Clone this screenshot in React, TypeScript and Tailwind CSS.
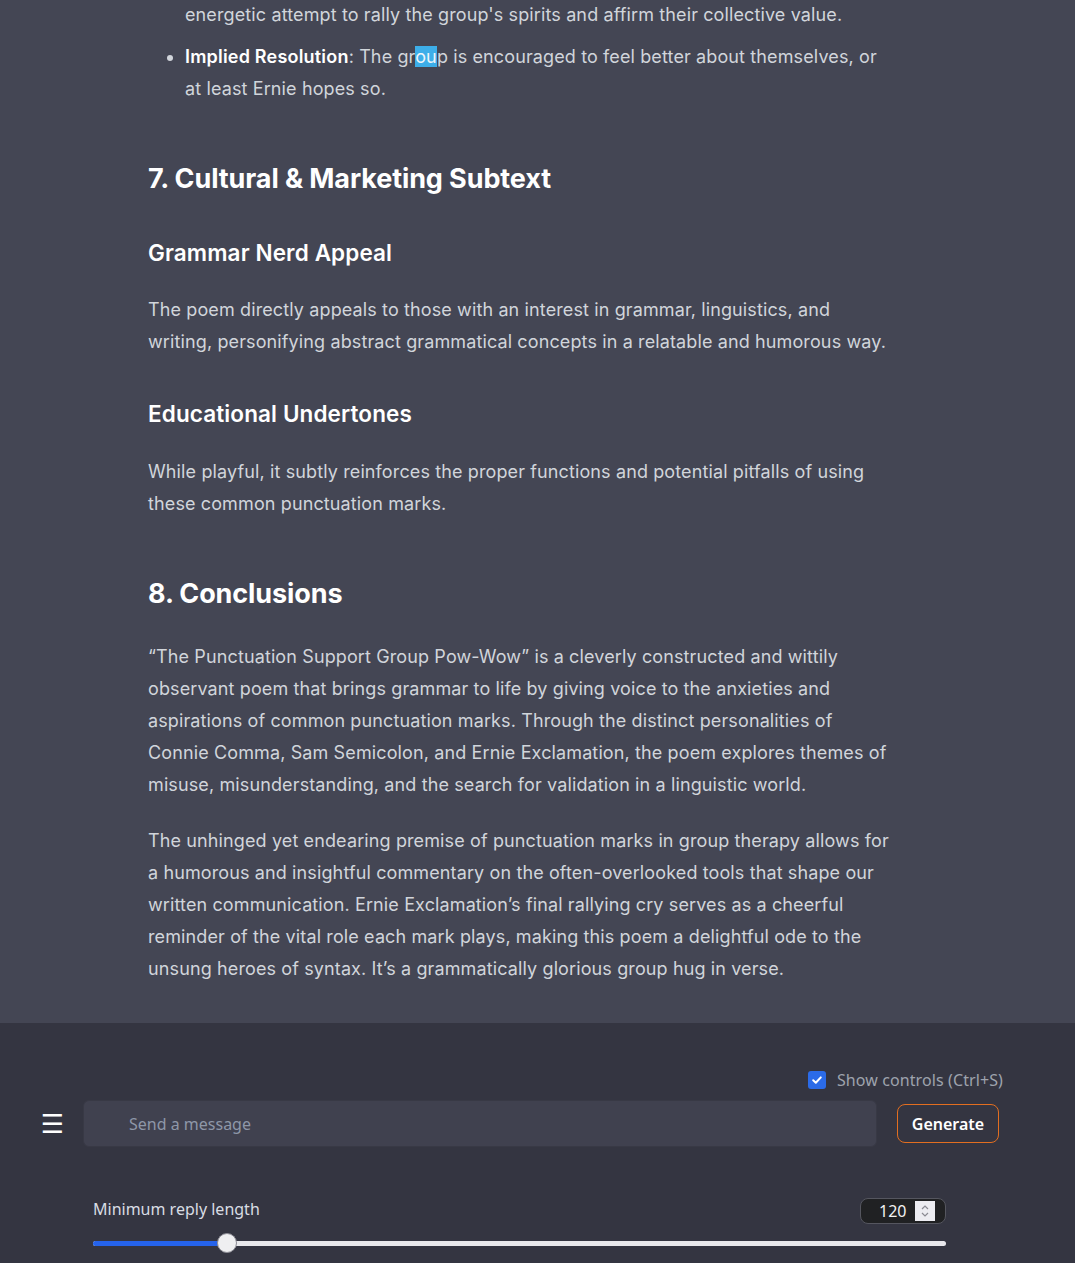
import React from "react";

function Heading2({ children, className = "" }: { children: React.ReactNode; className?: string }) {
  return (
    <h2 className={`text-[27px] leading-[36px] font-bold text-white tracking-[-0.1px] ${className}`}>
      {children}
    </h2>
  );
}

function Heading3({ children, className = "" }: { children: React.ReactNode; className?: string }) {
  return (
    <h3 className={`text-[22.5px] leading-[36px] font-semibold text-white ${className}`}>{children}</h3>
  );
}

function Transcript() {
  return (
    <main className="h-[1023px] shrink-0 overflow-hidden bg-[#444654]">
      <article className="ml-[148px] w-[750px] font-['Inter',sans-serif] text-[18px] leading-[32px] tracking-[0.12px] text-[#d1d5db]">
        <ul className="-mt-[1px] list-disc pl-[37px] pr-[8px] marker:text-[#d1d5db]">
          <li className="list-none">
            energetic attempt to rally the group's spirits and affirm their collective value.
          </li>
          <li className="mt-[10px]">
            <strong className="font-semibold tracking-[0.2px] text-white">Implied Resolution</strong>: The gr
            <span className="bg-[#3daee9] text-[#eef6fb]">ou</span>p is encouraged to feel better
            about themselves, or at least Ernie hopes so.
          </li>
        </ul>

        <Heading2 className="mt-[56px]">7. Cultural &amp; Marketing Subtext</Heading2>

        <Heading3 className="mt-[38px]">Grammar Nerd Appeal</Heading3>
        <p className="mt-[23px]">
          The poem directly appeals to those with an interest in grammar, linguistics, and
          writing, personifying abstract grammatical concepts in a relatable and humorous way.
        </p>

        <Heading3 className="mt-[38px]">Educational Undertones</Heading3>
        <p className="mt-[24px]">
          While playful, it subtly reinforces the proper functions and potential pitfalls of using
          these common punctuation marks.
        </p>

        <Heading2 className="mt-[56px]">8. Conclusions</Heading2>
        <p className="mt-[29px]">
          “The Punctuation Support Group Pow-Wow” is a cleverly constructed and wittily observant
          poem that brings grammar to life by giving voice to the anxieties and aspirations of
          common punctuation marks. Through the distinct personalities of Connie Comma, Sam
          Semicolon, and Ernie Exclamation, the poem explores themes of misuse, misunderstanding,
          and the search for validation in a linguistic world.
        </p>
        <p className="mt-[24px]">
          The unhinged yet endearing premise of punctuation marks in group therapy allows for a
          humorous and insightful commentary on the often-overlooked tools that shape our written
          communication. Ernie Exclamation’s final rallying cry serves as a cheerful reminder of the
          vital role each mark plays, making this poem a delightful ode to the unsung heroes of
          syntax. It’s a grammatically glorious group hug in verse.
        </p>
      </article>
    </main>
  );
}

function Controls() {
  const value = 120;
  const fill = 15.7;
  return (
    <section className="flex-1 bg-[#343541] font-['Noto_Sans',sans-serif]">
      <div className="flex justify-end pr-[72px] pt-[45px]">
        <label className="flex items-center gap-[11px] text-[16px] leading-[24px] tracking-[0.1px] text-[#9ea3ad]">
          <span className="flex h-[18px] w-[18px] items-center justify-center rounded-[3px] bg-[#2b6be8]">
            <svg viewBox="0 0 12 12" className="h-[12px] w-[12px]" fill="none">
              <path d="M2.2 6.3 4.8 8.8 9.8 3.4" stroke="white" strokeWidth="2" strokeLinecap="round" strokeLinejoin="round" />
            </svg>
          </span>
          Show controls (Ctrl+S)
        </label>
      </div>

      <div className="mt-[8px] flex items-center pr-[76px]">
        <button className="flex w-[83px] justify-center pl-[22px] font-['DejaVu_Sans',sans-serif] text-[26px] leading-none text-white">
          ☰
        </button>
        <div className="flex h-[47px] flex-1 items-center rounded-[6px] border border-[#383945] bg-[#40414f] pl-[45px] text-[16px] text-[#8e97a8]">
          Send a message
        </div>
        <button className="ml-[20px] h-[39px] w-[102px] rounded-[8px] border border-[#e26e20] text-[16px] font-semibold text-white">
          Generate
        </button>
      </div>

      <div className="ml-[93px] mt-[51px] w-[853px]">
        <div className="flex items-start justify-between">
          <span className="text-[16px] leading-[22px] text-[#d9dde4]">Minimum reply length</span>
          <div className="flex h-[26px] w-[86px] items-center rounded-[8px] border border-[#55565f] bg-[#202123] pl-[18px] pr-[10px]">
            <span className="flex-1 text-[16px] leading-none text-[#f2f2f2]">{value}</span>
            <span className="flex h-[20px] w-[20px] flex-col items-center justify-center bg-[#ececf1]">
              <svg viewBox="0 0 10 14" className="h-[14px] w-[10px]" fill="none">
                <path d="M2 5 5 2 8 5M2 9 5 12 8 9" stroke="#8a8a92" strokeWidth="1.2" />
              </svg>
            </span>
          </div>
        </div>
        <div className="relative mt-[9px] h-[20px]">
          <div className="absolute left-0 right-0 top-[8px] h-[5px] rounded-full bg-[#e8e8ec]" />
          <div
            className="absolute left-0 top-[8px] h-[5px] rounded-l-full bg-[#2563eb]"
            style={{ width: `${fill}%` }}
          />
          <div
            className="absolute top-0 h-[20px] w-[20px] -translate-x-1/2 rounded-full border border-[#8d8d95] bg-[#efeff1]"
            style={{ left: `${fill}%` }}
          />
        </div>
      </div>
    </section>
  );
}

export default function App() {
  return (
    <div className="flex h-[1263px] flex-col overflow-hidden">
      <Transcript />
      <Controls />
    </div>
  );
}
